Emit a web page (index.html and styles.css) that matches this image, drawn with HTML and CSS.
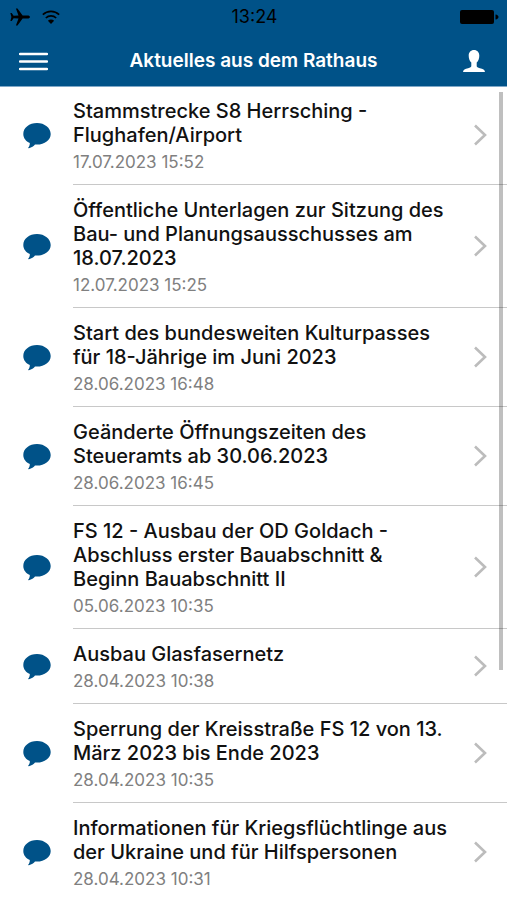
FILE: index.html
```html
<!DOCTYPE html>
<html lang="de">
<head>
  <meta charset="UTF-8">
  <meta name="viewport" content="width=device-width, initial-scale=1">
  <title>Aktuelles aus dem Rathaus</title>
  <link rel="stylesheet" href="styles.css">
</head>
<body>
  <!-- shared icons -->
  <svg class="sprite" aria-hidden="true">
    <symbol id="bubble" viewBox="0 0 28 26">
      <path d="M14 0C6.300 0 .3 4.800.3 10.900c0 4 2.500 7.200 6.500 9.100.1 1.900-.5 3.500-1.500 4.500-.3.500 0 .9.600.7 2.700-.6 4.800-1.900 6.100-3.700.7.100 1.300.1 2 .1 7.600 0 13.700-4.800 13.700-10.700S21.600 0 14 0z" fill="currentColor"/>
    </symbol>
    <symbol id="chevron" viewBox="0 0 14 22">
      <path d="M2 1.500 12 11 2 20.500" fill="none" stroke="currentColor" stroke-width="2.600"/>
    </symbol>
  </svg>

  <header class="header">
    <div class="status">
      <div class="status-left">
        <svg class="plane" viewBox="0 0 20 18" aria-hidden="true">
          <path d="M20 9c0-.9-1-1.500-2.400-1.500h-5L7.500.5H5.900l2.600 7-4.900.2L1.700 5H.4l1 4-1 4h1.300l1.900-2.700 4.900.2-2.600 7h1.600l5.100-7h5C19 10.500 20 9.900 20 9z"/>
        </svg>
        <svg class="wifi" viewBox="0 0 18 14" aria-hidden="true">
          <path d="M.8 4.700a11.800 11.800 0 0 1 16.400 0M3.800 8a7.500 7.500 0 0 1 10.400 0" fill="none" stroke="#000" stroke-width="1.600"/>
          <path d="M9 14l-3.100-3.300a4.400 4.400 0 0 1 6.200 0z"/>
        </svg>
      </div>
      <span class="clock">13:24</span>
      <svg class="battery" viewBox="0 0 39 14" aria-hidden="true">
        <rect width="34" height="14" rx="2"/>
        <path d="M35.500 4.500c2 .3 3 1.300 3 2.500s-1 2.200-3 2.500z"/>
      </svg>
    </div>
    <div class="navbar">
      <button class="nav-button" type="button" aria-label="Menü">
        <svg class="menu-icon" viewBox="0 0 29 19">
          <path d="M1 2h27M1 9.500h27M1 17h27" stroke="#fff" stroke-width="2.500" stroke-linecap="round"/>
        </svg>
      </button>
      <h1>Aktuelles aus dem Rathaus</h1>
      <button class="nav-button nav-profile" type="button" aria-label="Profil">
        <svg class="user-icon" viewBox="0 0 22 22">
          <path d="M11 0C7.800 0 5.700 2.300 5.700 5.600c0 2.900.8 5.500 2.600 7v3.400c0 1.200-1.100 1.700-3.200 2.200C2 19 .2 19.600 0 22h22c-.2-2.400-2-3-5.100-3.800-2.100-.5-3.200-1-3.200-2.200v-3.400c1.800-1.500 2.600-4.100 2.600-7C16.300 2.300 14.200 0 11 0z" fill="#fff"/>
        </svg>
      </button>
    </div>
  </header>

  <main class="content">
    <ul class="news">
      <li><a class="item" href="#">
        <svg class="bubble"><use href="#bubble"/></svg>
        <div class="item-body">
          <div class="text">
            <h2>Stammstrecke S8 Herrsching - Flughafen/Airport</h2>
            <time>17.07.2023 15:52</time>
          </div>
          <svg class="chevron"><use href="#chevron"/></svg>
        </div>
      </a></li>
      <li><a class="item" href="#">
        <svg class="bubble"><use href="#bubble"/></svg>
        <div class="item-body">
          <div class="text">
            <h2>Öffentliche Unterlagen zur Sitzung des Bau- und Planungsausschusses am 18.07.2023</h2>
            <time>12.07.2023 15:25</time>
          </div>
          <svg class="chevron"><use href="#chevron"/></svg>
        </div>
      </a></li>
      <li><a class="item" href="#">
        <svg class="bubble"><use href="#bubble"/></svg>
        <div class="item-body">
          <div class="text">
            <h2>Start des bundesweiten Kulturpasses für 18-Jährige im Juni 2023</h2>
            <time>28.06.2023 16:48</time>
          </div>
          <svg class="chevron"><use href="#chevron"/></svg>
        </div>
      </a></li>
      <li><a class="item" href="#">
        <svg class="bubble"><use href="#bubble"/></svg>
        <div class="item-body">
          <div class="text">
            <h2>Geänderte Öffnungszeiten des Steueramts ab 30.06.2023</h2>
            <time>28.06.2023 16:45</time>
          </div>
          <svg class="chevron"><use href="#chevron"/></svg>
        </div>
      </a></li>
      <li><a class="item" href="#">
        <svg class="bubble"><use href="#bubble"/></svg>
        <div class="item-body">
          <div class="text">
            <h2>FS 12 - Ausbau der OD Goldach - Abschluss erster Bauabschnitt &amp; Beginn Bauabschnitt II</h2>
            <time>05.06.2023 10:35</time>
          </div>
          <svg class="chevron"><use href="#chevron"/></svg>
        </div>
      </a></li>
      <li><a class="item" href="#">
        <svg class="bubble"><use href="#bubble"/></svg>
        <div class="item-body">
          <div class="text">
            <h2>Ausbau Glasfasernetz</h2>
            <time>28.04.2023 10:38</time>
          </div>
          <svg class="chevron"><use href="#chevron"/></svg>
        </div>
      </a></li>
      <li><a class="item" href="#">
        <svg class="bubble"><use href="#bubble"/></svg>
        <div class="item-body">
          <div class="text">
            <h2>Sperrung der Kreisstraße FS 12 von 13. März 2023 bis Ende 2023</h2>
            <time>28.04.2023 10:35</time>
          </div>
          <svg class="chevron"><use href="#chevron"/></svg>
        </div>
      </a></li>
      <li><a class="item" href="#">
        <svg class="bubble"><use href="#bubble"/></svg>
        <div class="item-body">
          <div class="text">
            <h2>Informationen für Kriegsflüchtlinge aus der Ukraine und für Hilfspersonen</h2>
            <time>28.04.2023 10:31</time>
          </div>
          <svg class="chevron"><use href="#chevron"/></svg>
        </div>
      </a></li>
    </ul>
    <div class="scroll-indicator"></div>
  </main>
</body>
</html>
```

FILE: styles.css
```css
* {
  box-sizing: border-box;
}

body {
  margin: 0;
  height: 100vh;
  display: flex;
  flex-direction: column;
  overflow: hidden;
  background: #fff;
  color: #111;
  font-family: Inter, "Liberation Sans", sans-serif;
}

.sprite {
  display: none;
}

.header {
  background: #005288;
  box-shadow: 0 1px 0 #7fa8c8;
  z-index: 1;
}

.status {
  display: grid;
  grid-template-columns: 1fr auto 1fr;
  align-items: center;
  height: 34px;
  padding: 0 8px 0 10px;
}

.status-left {
  display: flex;
  align-items: center;
  gap: 12px;
}

.plane {
  width: 20px;
  height: 18px;
}

.wifi {
  width: 18px;
  height: 14px;
}

.clock {
  color: #000;
  font-size: 18px;
  line-height: 20px;
}

.battery {
  width: 39px;
  height: 14px;
  justify-self: end;
}

.navbar {
  display: grid;
  grid-template-columns: 72px 1fr 72px;
  align-items: center;
  height: 52px;
  padding-top: 2px;
}

.navbar h1 {
  margin: 0;
  color: #fff;
  font-size: 19px;
  font-weight: 600;
  line-height: 24px;
  text-align: center;
}

.nav-button {
  display: flex;
  align-items: center;
  height: 44px;
  padding: 0 19px;
  border: none;
  background: none;
  cursor: pointer;
}

.nav-profile {
  justify-content: flex-end;
  padding-right: 22px;
}

.menu-icon {
  width: 29px;
  height: 19px;
}

.user-icon {
  width: 22px;
  height: 22px;
}

.content {
  position: relative;
  flex: 1;
  overflow: hidden;
}

.news {
  margin: 0;
  padding: 0;
  list-style: none;
}

.item {
  display: flex;
  align-items: center;
  padding-left: 23px;
  gap: 22px;
  color: inherit;
  text-decoration: none;
}

.bubble {
  flex: none;
  width: 28px;
  height: 26px;
  color: #005288;
}

.item-body {
  flex: 1;
  display: flex;
  align-items: center;
  gap: 20px;
  padding: 12px 20px 12px 0;
  border-bottom: 1px solid #c8c8c8;
}

.text {
  flex: 1;
  padding-top: 1px;
}

.text h2 {
  margin: 0 0 5px;
  font-size: 20px;
  font-weight: 500;
  line-height: 24px;
}

.text time {
  display: block;
  color: #808080;
  font-size: 17px;
  line-height: 20px;
}

.chevron {
  flex: none;
  width: 14px;
  height: 22px;
  color: #bcbcbc;
}

.scroll-indicator {
  position: absolute;
  top: 6px;
  right: 4px;
  width: 4px;
  height: 71%;
  background: rgba(0, 0, 0, 0.25);
}
```
